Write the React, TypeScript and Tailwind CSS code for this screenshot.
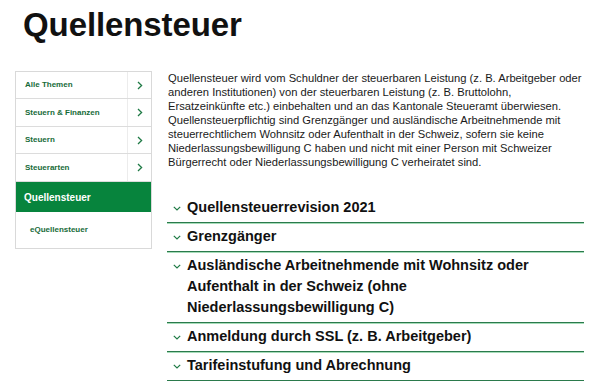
import React from "react";

const Chevron = () => (
  <svg width="6" height="9" viewBox="0 0 6 9" fill="none">
    <path d="M1 1 L4.6 4.5 L1 8" stroke="#1f7a45" strokeWidth="1.3" />
  </svg>
);

const Down = () => (
  <svg width="8" height="5" viewBox="0 0 8 5" fill="none">
    <path d="M0.8 0.8 L4 4 L7.2 0.8" stroke="#1f7a45" strokeWidth="1.2" />
  </svg>
);

const navItems = [
  { label: "Alle Themen", h: "h-[27px]" },
  { label: "Steuern & Finanzen", h: "h-[28px]" },
  { label: "Steuern", h: "h-[27px]" },
  { label: "Steuerarten", h: "h-[28px]" },
];

const acc = [
  "Quellensteuerrevision 2021",
  "Grenzgänger",
  "Ausländische Arbeitnehmende mit Wohnsitz oder Aufenthalt in der Schweiz (ohne Niederlassungsbewilligung C)",
  "Anmeldung durch SSL (z. B. Arbeitgeber)",
  "Tarifeinstufung und Abrechnung",
];

export default function App() {
  return (
    <div className="w-[600px] h-[381px] overflow-hidden bg-white font-['Liberation_Sans',Arial,sans-serif] text-[#111]">
      <h1 className="pl-[23px] pt-[5px] text-[33px] leading-[40px] font-bold tracking-[-0.1px]">
        Quellensteuer
      </h1>
      <div className="flex pl-[15px] mt-[26px] gap-[15px]">
        <nav className="w-[137px] self-start border border-[#d9d9d9]">
          {navItems.map((it) => (
            <div key={it.label} className={`flex ${it.h} border-b border-[#dcdcdc]`}>
              <div className="flex-1 flex items-center pl-[9px] text-[8px] font-bold text-[#176b38]">
                {it.label}
              </div>
              <div className="w-[24px] flex items-center justify-center border-l border-[#ececec]">
                <Chevron />
              </div>
            </div>
          ))}
          <div className="h-[30px] flex items-center pl-[8px] bg-[#07843d] text-white text-[10px] font-bold">
            Quellensteuer
          </div>
          <div className="h-[36px] flex items-center pl-[14px] text-[8px] font-bold text-[#176b38]">
            eQuellensteuer
          </div>
        </nav>
        <main className="w-[417px]">
          <p className="pl-[1px] text-[11.2px] leading-[14px] text-[#1a1a1a]">
            Quellensteuer wird vom Schuldner der steuerbaren Leistung (z. B. Arbeitgeber oder anderen
            Institutionen) von der steuerbaren Leistung (z. B. Bruttolohn, Ersatzeinkünfte etc.)
            einbehalten und an das Kantonale Steueramt überwiesen. Quellensteuerpflichtig sind
            Grenzgänger und ausländische Arbeitnehmende mit steuerrechtlichem Wohnsitz oder Aufenthalt
            in der Schweiz, sofern sie keine Niederlassungsbewilligung C haben und nicht mit einer
            Person mit Schweizer Bürgerrecht oder Niederlassungsbewilligung C verheiratet sind.
          </p>
          <div className="mt-[25px]">
            {acc.map((t) => (
              <div
                key={t}
                className="flex pt-[3px] pb-[4px] border-b border-[#2b7a4c] shadow-[0_1px_0_#a6dcb9]"
              >
                <div className="w-[20px] h-[21px] flex items-center justify-center pt-[2px]">
                  <Down />
                </div>
                <div className="flex-1 pr-[30px] text-[14.5px] leading-[21px] font-bold text-[#111]">
                  {t}
                </div>
              </div>
            ))}
          </div>
        </main>
      </div>
    </div>
  );
}
